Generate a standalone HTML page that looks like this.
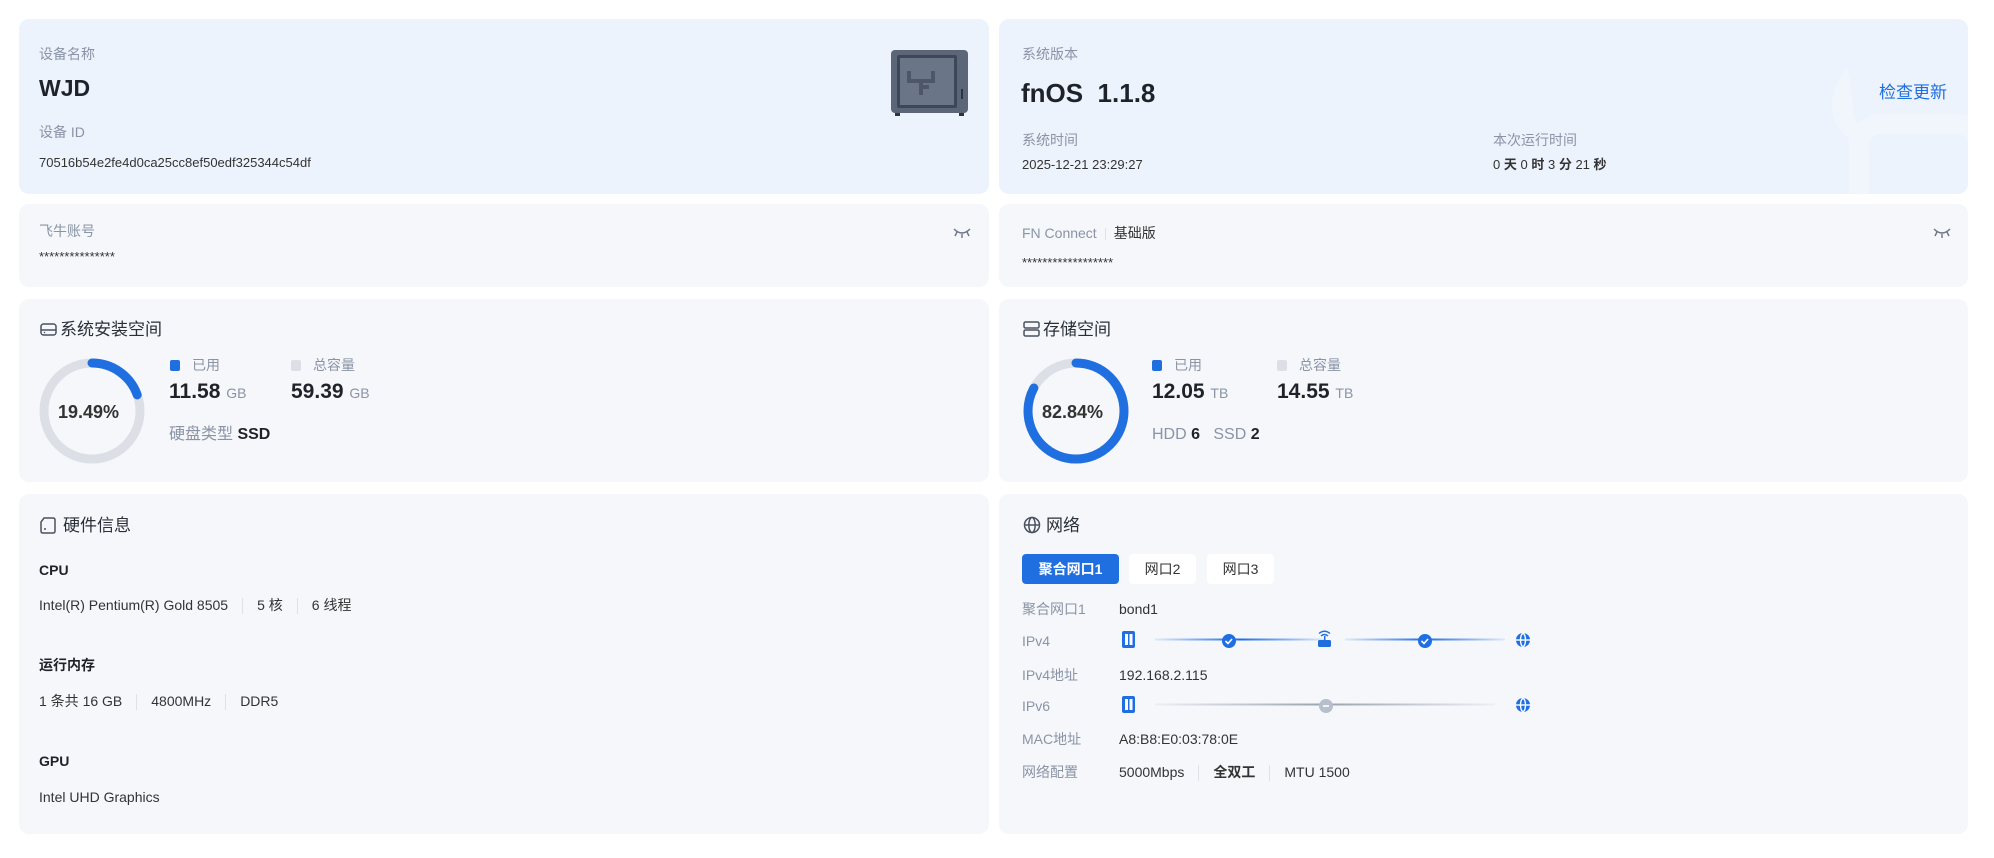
<!DOCTYPE html>
<html><head><meta charset="utf-8"><style>
*{margin:0;padding:0;box-sizing:border-box}
body{width:1994px;height:858px;background:#fff;font-family:"Liberation Sans","Noto Sans CJK SC",sans-serif;color:#1f2329;position:relative;overflow:hidden}
.c{position:absolute;border-radius:10px;background:#f5f7fb}
.b{background:#edf3fc}
.t{position:absolute;white-space:nowrap;line-height:1}
.g{color:#8a94a6}
.h{font-size:17px;color:#2a2f38}
.sep{display:inline-block;width:1px;height:16px;background:#dde1e8;vertical-align:middle;margin:0 14px}
.tab{position:absolute;top:554px;height:30px;border-radius:4px;background:#fff;font-size:14px;line-height:30px;text-align:center;color:#333}
</style></head><body>
<div class="c b" style="left:19px;top:19px;width:970px;height:175px"></div>
<div class="c b" style="left:999px;top:19px;width:969px;height:175px;overflow:hidden">
<svg style="position:absolute;left:810px;top:40px" width="160" height="140"><path d="M38 10 C20 30 15 60 40 80 L60 85 L55 75 C40 60 45 35 38 10Z" fill="#f1f5fc"/><rect x="50" y="65" width="120" height="100" rx="22" fill="none" stroke="#f1f5fc" stroke-width="20"/></svg>
</div>
<div class="c" style="left:19px;top:204px;width:970px;height:83px"></div>
<div class="c" style="left:999px;top:204px;width:969px;height:83px"></div>
<div class="c" style="left:19px;top:299px;width:970px;height:183px"></div>
<div class="c" style="left:999px;top:299px;width:969px;height:183px"></div>
<div class="c" style="left:19px;top:494px;width:970px;height:340px"></div>
<div class="c" style="left:999px;top:494px;width:969px;height:340px"></div>

<div class="t g" style="left:39px;top:47px;font-size:14px">设备名称</div>
<div class="t" style="left:39px;top:77px;font-size:23px;font-weight:600">WJD</div>
<div class="t g" style="left:39px;top:125px;font-size:14px">设备 ID</div>
<div class="t" style="left:39px;top:156px;font-size:13px;color:#333">70516b54e2fe4d0ca25cc8ef50edf325344c54df</div>
<svg style="position:absolute;left:889px;top:49px" width="82" height="68"><rect x="2" y="1" width="77" height="63" rx="4" fill="#5b6678"/><rect x="8" y="6" width="60" height="53" rx="2" fill="#3d4757"/><rect x="11" y="9" width="54" height="47" fill="#6a7587"/><path d="M20 22 v10 h24 v-10 M32 32 v14 M32 38 h8" stroke="#4d5768" stroke-width="4" fill="none"/><rect x="72" y="40" width="2" height="10" fill="#2c3440"/><rect x="6" y="64" width="5" height="3" fill="#333"/><rect x="70" y="64" width="5" height="3" fill="#333"/></svg>

<div class="t g" style="left:1022px;top:47px;font-size:14px">系统版本</div>
<div class="t" style="left:1021px;top:80px;font-size:26px;font-weight:600">fnOS&nbsp; 1.1.8</div>
<div class="t" style="left:1879px;top:84px;font-size:17px;color:#1f6fe0">检查更新</div>
<div class="t g" style="left:1022px;top:133px;font-size:14px">系统时间</div>
<div class="t" style="left:1022px;top:158px;font-size:13px;color:#333">2025-12-21 23:29:27</div>
<div class="t g" style="left:1493px;top:133px;font-size:14px">本次运行时间</div>
<div class="t" style="left:1493px;top:158px;font-size:13px;color:#333">0 <b>天</b> 0 <b>时</b> 3 <b>分</b> 21 <b>秒</b></div>

<div class="t g" style="left:39px;top:224px;font-size:14px">飞牛账号</div>
<div class="t" style="left:39px;top:250px;font-size:13px;color:#333">***************</div>
<svg style="position:absolute;left:953px;top:227px" width="18" height="12"><path d="M1 2 Q9 10 17 2 M4 5 L2 9 M9 7 V11 M14 5 L16 9" stroke="#6b7587" stroke-width="1.4" fill="none"/></svg>
<div class="t g" style="left:1022px;top:226px;font-size:14px">FN Connect<span class="sep" style="height:12px;margin:0 8px"></span><span style="color:#333">基础版</span></div>
<div class="t" style="left:1022px;top:256px;font-size:13px;color:#333">******************</div>
<svg style="position:absolute;left:1933px;top:227px" width="18" height="12"><path d="M1 2 Q9 10 17 2 M4 5 L2 9 M9 7 V11 M14 5 L16 9" stroke="#6b7587" stroke-width="1.4" fill="none"/></svg>

<svg style="position:absolute;left:40px;top:322px" width="17" height="15"><rect x="1" y="2" width="15" height="11" rx="2.5" fill="none" stroke="#4a5260" stroke-width="1.5"/><path d="M1 8 H16" stroke="#4a5260" stroke-width="1.5"/><circle cx="4.5" cy="10.5" r=".8" fill="#4a5260"/></svg>
<div class="t h" style="left:60px;top:321px">系统安装空间</div>
<svg style="position:absolute;left:38px;top:357px" width="108" height="108"><circle cx="54" cy="54" r="48" fill="none" stroke="#dcdfe6" stroke-width="9"/><circle cx="54" cy="54" r="48" fill="none" stroke="#1f6fe0" stroke-width="9" stroke-dasharray="58.8 400" transform="rotate(-90 54 54)" stroke-linecap="round"/></svg>
<div class="t" style="left:58px;top:403px;font-size:18px;font-weight:600;color:#333">19.49%</div>
<div class="t g" style="left:170px;top:358px;font-size:14px"><span style="display:inline-block;width:10px;height:11px;background:#1f6fe0;border-radius:2px;margin-right:12px;vertical-align:-1px"></span>已用</div>
<div class="t g" style="left:291px;top:358px;font-size:14px"><span style="display:inline-block;width:10px;height:11px;background:#dcdfe6;border-radius:2px;margin-right:12px;vertical-align:-1px"></span>总容量</div>
<div class="t" style="left:169px;top:381px;font-size:21px;font-weight:600">11.58 <span class="g" style="font-size:14px;font-weight:400">GB</span></div>
<div class="t" style="left:291px;top:381px;font-size:21px;font-weight:600">59.39 <span class="g" style="font-size:14px;font-weight:400">GB</span></div>
<div class="t g" style="left:169px;top:427px;font-size:16px">硬盘类型 <span style="color:#1f2329;font-weight:600">SSD</span></div>

<svg style="position:absolute;left:1023px;top:321px" width="17" height="16"><rect x="1" y="1" width="15" height="6" rx="1.5" fill="none" stroke="#4a5260" stroke-width="1.5"/><rect x="1" y="9" width="15" height="6" rx="1.5" fill="none" stroke="#4a5260" stroke-width="1.5"/></svg>
<div class="t h" style="left:1043px;top:321px">存储空间</div>
<svg style="position:absolute;left:1022px;top:357px" width="108" height="108"><circle cx="54" cy="54" r="48" fill="none" stroke="#dcdfe6" stroke-width="9"/><circle cx="54" cy="54" r="48" fill="none" stroke="#1f6fe0" stroke-width="9" stroke-dasharray="249.8 400" transform="rotate(-90 54 54)" stroke-linecap="round"/></svg>
<div class="t" style="left:1042px;top:403px;font-size:18px;font-weight:600;color:#333">82.84%</div>
<div class="t g" style="left:1152px;top:358px;font-size:14px"><span style="display:inline-block;width:10px;height:11px;background:#1f6fe0;border-radius:2px;margin-right:12px;vertical-align:-1px"></span>已用</div>
<div class="t g" style="left:1277px;top:358px;font-size:14px"><span style="display:inline-block;width:10px;height:11px;background:#dcdfe6;border-radius:2px;margin-right:12px;vertical-align:-1px"></span>总容量</div>
<div class="t" style="left:1152px;top:381px;font-size:21px;font-weight:600">12.05 <span class="g" style="font-size:14px;font-weight:400">TB</span></div>
<div class="t" style="left:1277px;top:381px;font-size:21px;font-weight:600">14.55 <span class="g" style="font-size:14px;font-weight:400">TB</span></div>
<div class="t g" style="left:1152px;top:427px;font-size:16px">HDD <span style="color:#1f2329;font-weight:600">6</span>&nbsp;&nbsp; SSD <span style="color:#1f2329;font-weight:600">2</span></div>

<svg style="position:absolute;left:40px;top:517px" width="16" height="17"><path d="M4 1 H13 Q15 1 15 3 V14 Q15 16 13 16 H3 Q1 16 1 14 V5 Z" fill="none" stroke="#4a5260" stroke-width="1.5"/><path d="M5 11 v2" stroke="#4a5260" stroke-width="1.5"/></svg>
<div class="t h" style="left:63px;top:517px">硬件信息</div>
<div class="t" style="left:39px;top:563px;font-size:14px;font-weight:600">CPU</div>
<div class="t" style="left:39px;top:598px;font-size:14px;color:#333">Intel(R) Pentium(R) Gold 8505<span class="sep"></span>5 核<span class="sep"></span>6 线程</div>
<div class="t" style="left:39px;top:658px;font-size:14px;font-weight:600">运行内存</div>
<div class="t" style="left:39px;top:694px;font-size:14px;color:#333">1 条共 16 GB<span class="sep"></span>4800MHz<span class="sep"></span>DDR5</div>
<div class="t" style="left:39px;top:754px;font-size:14px;font-weight:600">GPU</div>
<div class="t" style="left:39px;top:790px;font-size:14px;color:#333">Intel UHD Graphics</div>

<svg style="position:absolute;left:1023px;top:516px" width="18" height="18"><circle cx="9" cy="9" r="7.5" fill="none" stroke="#4a5260" stroke-width="1.5"/><ellipse cx="9" cy="9" rx="3.2" ry="7.5" fill="none" stroke="#4a5260" stroke-width="1.5"/><path d="M1.5 9 H16.5" stroke="#4a5260" stroke-width="1.5"/></svg>
<div class="t h" style="left:1046px;top:517px">网络</div>
<div class="tab" style="left:1022px;width:97px;background:#1f6fe0;color:#fff;font-weight:600">聚合网口1</div>
<div class="tab" style="left:1129px;width:67px">网口2</div>
<div class="tab" style="left:1207px;width:67px">网口3</div>
<div class="t g" style="left:1022px;top:602px;font-size:14px">聚合网口1</div>
<div class="t" style="left:1119px;top:602px;font-size:14px;color:#333">bond1</div>
<div class="t g" style="left:1022px;top:634px;font-size:14px">IPv4</div>
<div class="t g" style="left:1022px;top:668px;font-size:14px">IPv4地址</div>
<div class="t" style="left:1119px;top:668px;font-size:14px;color:#333">192.168.2.115</div>
<div class="t g" style="left:1022px;top:699px;font-size:14px">IPv6</div>
<div class="t g" style="left:1022px;top:732px;font-size:14px">MAC地址</div>
<div class="t" style="left:1119px;top:732px;font-size:14px;color:#333">A8:B8:E0:03:78:0E</div>
<div class="t g" style="left:1022px;top:765px;font-size:14px">网络配置</div>
<div class="t" style="left:1119px;top:765px;font-size:14px;color:#333">5000Mbps<span class="sep"></span><b>全双工</b><span class="sep"></span>MTU 1500</div>
<svg style="position:absolute;left:1115px;top:627px" width="430" height="100">
<defs><linearGradient id="lg" x1="0" x2="1"><stop offset="0" stop-color="#1f6fe0" stop-opacity=".1"/><stop offset=".5" stop-color="#1f6fe0"/><stop offset="1" stop-color="#1f6fe0" stop-opacity=".1"/></linearGradient>
<linearGradient id="lg2" x1="0" x2="1"><stop offset="0" stop-color="#9aa3b2" stop-opacity=".1"/><stop offset=".5" stop-color="#9aa3b2"/><stop offset="1" stop-color="#9aa3b2" stop-opacity=".1"/></linearGradient>
<g id="bond"><rect x="0" y="0" width="13" height="17" rx="2" fill="#1f6fe0"/><rect x="3" y="3" width="3" height="11" fill="#fff"/><rect x="7.5" y="3" width="3" height="11" fill="#fff"/></g>
<g id="glb"><circle cx="8" cy="8" r="7" fill="#1f6fe0"/><ellipse cx="8" cy="8" rx="2.5" ry="6.5" fill="none" stroke="#fff" stroke-width="1.4"/><path d="M1 8 H15" stroke="#fff" stroke-width="1.4"/></g></defs>
<use href="#bond" x="7" y="4"/>
<rect x="40" y="11.5" width="170" height="2" fill="url(#lg)"/>
<circle cx="114" cy="14" r="7" fill="#1f6fe0"/><path d="M110.5 14 l2.5 2.5 l4-4.5" stroke="#fff" stroke-width="1.6" fill="none"/>
<g transform="translate(203 3)"><rect x="0" y="10" width="13" height="7" rx="1.5" fill="#1f6fe0"/><path d="M3 6 Q6.5 3 10 6 M1 3.5 Q6.5 -1 12 3.5" stroke="#1f6fe0" stroke-width="1.4" fill="none"/><rect x="6" y="6" width="1.5" height="4" fill="#1f6fe0"/></g>
<rect x="230" y="11.5" width="160" height="2" fill="url(#lg)"/>
<circle cx="310" cy="14" r="7" fill="#1f6fe0"/><path d="M306.5 14 l2.5 2.5 l4-4.5" stroke="#fff" stroke-width="1.6" fill="none"/>
<use href="#glb" x="400" y="5"/>
<use href="#bond" x="7" y="69"/>
<rect x="40" y="76.5" width="340" height="2" fill="url(#lg2)"/>
<circle cx="211" cy="79" r="7" fill="#b7bfcc"/><path d="M208 79 H214" stroke="#fff" stroke-width="1.6"/>
<use href="#glb" x="400" y="70"/>
</svg>
</body></html>
